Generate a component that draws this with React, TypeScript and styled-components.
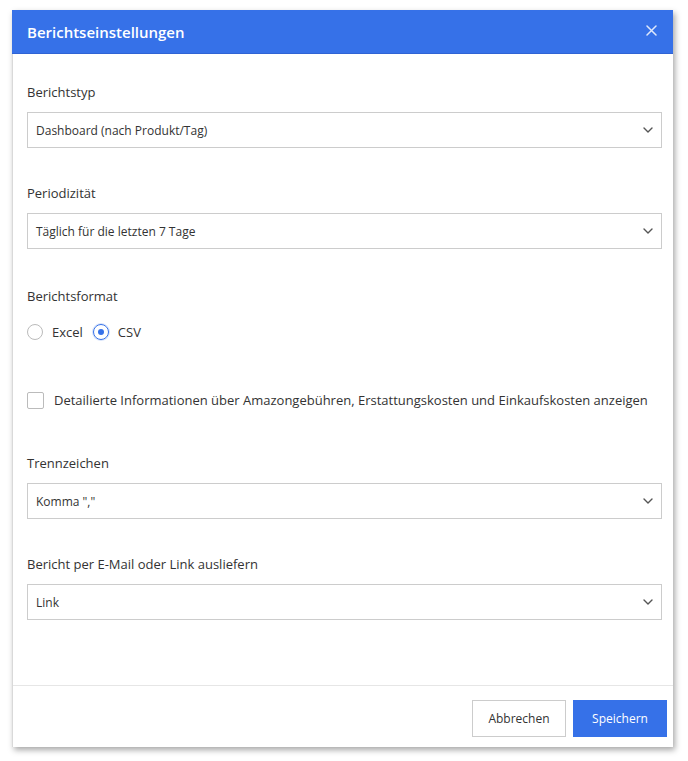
import styled, { createGlobalStyle } from "styled-components";

const GlobalStyle = createGlobalStyle`
  html, body {
    margin: 0;
    padding: 0;
    background: #ffffff;
  }
  body {
    font-family: "Open Sans", "Noto Sans", sans-serif;
    color: #333333;
  }
`;

const fields = [
  { label: "Berichtstyp", value: "Dashboard (nach Produkt/Tag)" },
  { label: "Periodizität", value: "Täglich für die letzten 7 Tage" },
];

const lowerFields = [
  { label: "Trennzeichen", value: 'Komma ","' },
  { label: "Bericht per E-Mail oder Link ausliefern", value: "Link" },
];

function Chevron() {
  return (
    <svg width="10" height="6" viewBox="0 0 10 6" fill="none">
      <path d="M1 1l4 4 4-4" stroke="#555" strokeWidth="1.4" strokeLinecap="round" strokeLinejoin="round" />
    </svg>
  );
}

function CloseIcon() {
  return (
    <svg width="11" height="11" viewBox="0 0 11 11">
      <path d="M1 1l9 9M10 1l-9 9" stroke="#dfe8fb" strokeWidth="1.5" strokeLinecap="round" />
    </svg>
  );
}

function SelectField({ label, value }) {
  return (
    <Group>
      <Label>{label}</Label>
      <Select>
        <span>{value}</span>
        <Chevron />
      </Select>
    </Group>
  );
}

export default function App() {
  return (
    <>
      <GlobalStyle />
      <Page>
        <Modal>
          <Header>
            <Title>Berichtseinstellungen</Title>
            <CloseButton>
              <CloseIcon />
            </CloseButton>
          </Header>
          <Content>
            {fields.map((f) => (
              <SelectField key={f.label} label={f.label} value={f.value} />
            ))}
            <Label $offset={2}>Berichtsformat</Label>
            <RadioRow>
              <RadioOption>
                <Radio />
                Excel
              </RadioOption>
              <RadioOption>
                <Radio $checked />
                CSV
              </RadioOption>
            </RadioRow>
            <CheckRow>
              <Checkbox />
              Detailierte Informationen über Amazongebühren, Erstattungskosten und Einkaufskosten anzeigen
            </CheckRow>
            {lowerFields.map((f) => (
              <SelectField key={f.label} label={f.label} value={f.value} />
            ))}
          </Content>
          <Footer>
            <Button>Abbrechen</Button>
            <Button $primary>Speichern</Button>
          </Footer>
        </Modal>
      </Page>
    </>
  );
}

const Page = styled.div`
  padding: 10px 15px 14px 12px;
`;

const Modal = styled.div`
  width: 661px;
  height: 737px;
  display: flex;
  flex-direction: column;
  background: #ffffff;
  border-left: 1px solid #d9d9d9;
  box-sizing: border-box;
  box-shadow: 2px 3px 6px rgba(0, 0, 0, 0.35);
`;

const Header = styled.div`
  height: 44px;
  margin-left: -1px;
  display: flex;
  align-items: center;
  justify-content: space-between;
  padding: 0 16px 0 15px;
  background: #3671e8;
  border-bottom: 1px solid #2f63d4;
  box-sizing: border-box;
`;

const Title = styled.div`
  color: #ffffff;
  font-size: 15px;
  font-weight: 600;
`;

const CloseButton = styled.div`
  display: flex;
  align-items: center;
  margin-top: -2px;
`;

const Content = styled.div`
  flex: 1;
  padding: 28px 11px 0 14px;
  display: flex;
  flex-direction: column;
`;

const Group = styled.div`
  margin-bottom: 35px;
`;

const Label = styled.div<{ $offset?: number }>`
  font-size: 13px;
  line-height: 20px;
  margin-top: ${(p) => p.$offset || 0}px;
  margin-bottom: 10px;
  color: #333333;
`;

const Select = styled.div`
  height: 36px;
  box-sizing: border-box;
  border: 1px solid #cccccc;
  display: flex;
  align-items: center;
  justify-content: space-between;
  padding: 0 8px 0 8px;
  font-size: 12px;
  color: #333333;
`;

const RadioRow = styled.div`
  display: flex;
  align-items: center;
  height: 20px;
  margin-top: 6px;
`;

const RadioOption = styled.label`
  display: flex;
  align-items: center;
  gap: 9px;
  margin-right: 10px;
  font-size: 13px;
  color: #333333;
`;

const Radio = styled.span<{ $checked?: boolean }>`
  width: 16px;
  height: 16px;
  box-sizing: border-box;
  border-radius: 50%;
  border: 1px solid ${(p) => (p.$checked ? "#3671e8" : "#bbbbbb")};
  box-shadow: ${(p) => (p.$checked ? "0 0 0 1px rgba(54, 113, 232, 0.2)" : "none")};
  display: flex;
  align-items: center;
  justify-content: center;
  &::after {
    content: "";
    width: 6px;
    height: 6px;
    border-radius: 50%;
    background: ${(p) => (p.$checked ? "#3671e8" : "transparent")};
  }
`;

const CheckRow = styled.label`
  display: flex;
  align-items: center;
  gap: 10px;
  height: 20px;
  margin-top: 48px;
  margin-bottom: 43px;
  font-size: 13px;
  color: #333333;
  white-space: nowrap;
`;

const Checkbox = styled.span`
  width: 17px;
  height: 17px;
  flex: none;
  box-sizing: border-box;
  border: 1px solid #bbbbbb;
  border-radius: 2px;
`;

const Footer = styled.div`
  height: 62px;
  box-sizing: border-box;
  border-top: 1px solid #e6e6e6;
  display: flex;
  justify-content: flex-end;
  align-items: flex-start;
  gap: 7px;
  padding: 14px 6px 0 0;
`;

const Button = styled.button<{ $primary?: boolean }>`
  width: 94px;
  height: 37px;
  box-sizing: border-box;
  font-family: "Open Sans", "Noto Sans", sans-serif;
  font-size: 12px;
  cursor: pointer;
  border: 1px solid ${(p) => (p.$primary ? "#3671e8" : "#cccccc")};
  background: ${(p) => (p.$primary ? "#3671e8" : "#ffffff")};
  color: ${(p) => (p.$primary ? "#ffffff" : "#333333")};
`;
